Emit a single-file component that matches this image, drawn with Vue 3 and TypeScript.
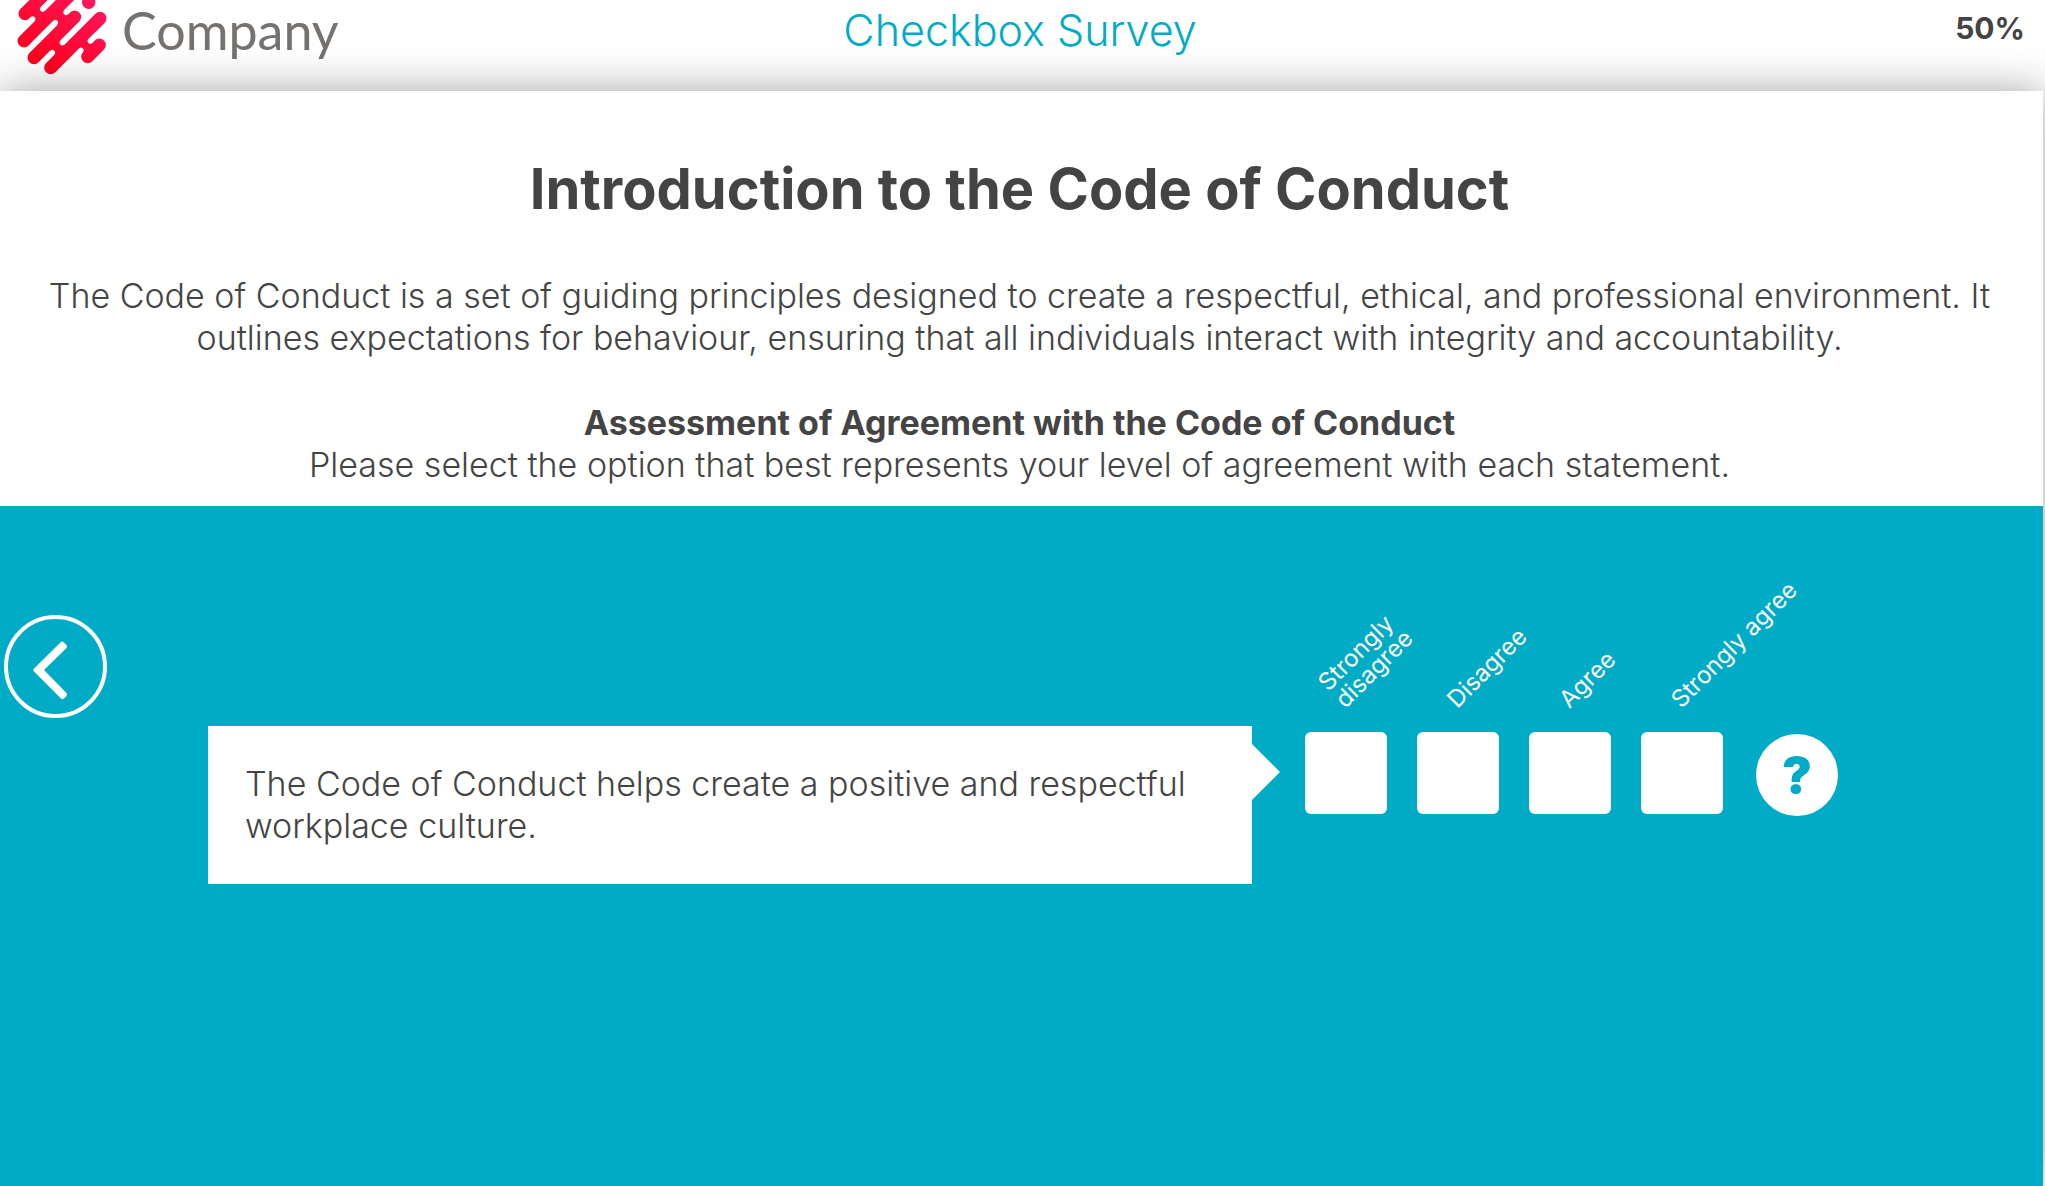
<script setup lang="ts">
import { ref } from 'vue'

interface Option {
  id: string
  lines: string[]
}

const options: Option[] = [
  { id: 'strongly-disagree', lines: ['Strongly', 'disagree'] },
  { id: 'disagree', lines: ['Disagree'] },
  { id: 'agree', lines: ['Agree'] },
  { id: 'strongly-agree', lines: ['Strongly agree'] },
]

const selected = ref<string[]>([])
</script>

<template>
  <div class="page">
    <header class="header">
      <div class="brand">
        <svg class="mark" viewBox="45 0 285 240" aria-hidden="true">
          <defs>
            <linearGradient id="mark-red" gradientUnits="userSpaceOnUse" x1="90" y1="200" x2="260" y2="-10">
              <stop offset="0" stop-color="#ff0018" />
              <stop offset="1" stop-color="#ff1559" />
            </linearGradient>
          </defs>
          <g fill="none" stroke="url(#mark-red)" stroke-width="39" stroke-linecap="round">
            <path d="M75 41L135 -19" />
            <path d="M72 123L214 -19" />
            <path d="M102 173L224 51" />
            <path d="M152 203L300 55" />
            <path d="M263 170L298 135" />
            <path d="M98 57L128 27M166 68L198 37M157 158L187 128M243 151L271 123" stroke-width="34" stroke-linecap="butt" />
          </g>
          <circle cx="266" cy="7" r="20" fill="url(#mark-red)" />
          <g fill="none" stroke="#fff" stroke-width="16" stroke-linecap="round">
            <path d="M98 57L85 70M128 27L165 -10M166 68L100 134M198 37L235 0M157 158L135 180M187 128L250 65M271 123L290 104M243 151L239 155" />
          </g>
        </svg>
        <span class="brand-name">Company</span>
      </div>
      <p class="survey-name">Checkbox Survey</p>
      <p class="progress">50%</p>
    </header>

    <main class="panel">
      <section class="intro">
        <h1>Introduction to the Code of Conduct</h1>
        <p>
          The Code of Conduct is a set of guiding principles designed to create a respectful, ethical, and professional environment. It
          outlines expectations for behaviour, ensuring that all individuals interact with integrity and accountability.
        </p>
        <h2>Assessment of Agreement with the Code of Conduct</h2>
        <p>Please select the option that best represents your level of agreement with each statement.</p>
      </section>

      <section class="survey">
        <button class="back" type="button" aria-label="Previous">
          <svg viewBox="0 0 103 103" aria-hidden="true">
            <circle cx="51.5" cy="51.5" r="49.5" fill="none" stroke="#fff" stroke-width="4" />
            <path d="M57.5 26.5Q58.500 26 60 27.500L62.500 30Q63.500 31.500 62.500 33L40 55L62.500 78Q63.500 79.500 62.500 81L60 83.500Q58.500 84.500 57 83.500L30 56.500Q28.500 55 30 53.500Z" fill="#fff" />
          </svg>
        </button>
        <div class="question">
          <p class="statement">The Code of Conduct helps create a positive and respectful workplace culture.</p>
          <svg class="pointer" viewBox="0 0 28 56" aria-hidden="true"><path d="M0 0L28 28L0 56Z" fill="#fff" /></svg>
          <div class="answers">
            <div v-for="option in options" :key="option.id" class="option">
              <label :for="option.id"><span v-for="line in option.lines" :key="line">{{ line }}</span></label>
              <input :id="option.id" v-model="selected" type="checkbox" :value="option.id" />
            </div>
          </div>
          <button class="help" type="button">?</button>
        </div>
      </section>
    </main>
  </div>
</template>

<style>
body {
  margin: 0;
  background: #fff;
}
</style>

<style scoped>
.page {
  display: flex;
  flex-direction: column;
  min-height: 100vh;
  overflow: hidden;
  color: #444;
  font-family: Inter, "Open Sans", sans-serif;
  font-size: 34px;
  line-height: 42px;
}

h1,
h2,
p {
  margin: 0;
}

.header {
  display: grid;
  grid-template-columns: 1fr auto 1fr;
  height: 91px;
  padding: 0 20px 0 15px;
}

.brand {
  display: flex;
}

.mark {
  width: 95px;
  height: 80px;
}

.brand-name {
  margin-left: 12px;
  color: #767270;
  font-family: Lato, "Open Sans", sans-serif;
  font-size: 52px;
  line-height: 60px;
}

.survey-name {
  color: #00acc5;
  font-size: 43px;
  font-weight: 300;
  line-height: 60px;
}

.progress {
  padding-top: 7px;
  font-size: 30px;
  font-weight: 700;
  text-align: right;
}

.panel {
  display: flex;
  flex: 1;
  flex-direction: column;
  margin-right: 2px;
  background: #fff;
  box-shadow: 0 0 40px rgba(0, 0, 0, 0.36);
}

.intro {
  padding: 62px 44px 20px 40px;
  font-weight: 300;
  text-align: center;
}

.intro h1 {
  margin-bottom: 50px;
  font-size: 56px;
  font-weight: 700;
  line-height: 72px;
}

.intro h2 {
  margin-top: 43px;
  font-size: 34px;
  font-weight: 700;
  line-height: 42px;
}

.survey {
  display: flex;
  flex: 1;
  align-items: flex-start;
  padding: 109px 205px 0 4px;
  background: #00acc5;
}

.back {
  flex: none;
  width: 103px;
  height: 103px;
  padding: 0;
  border: 0;
  background: none;
}

.back svg {
  display: block;
}

.question {
  display: flex;
  flex: 1;
  align-items: flex-start;
  margin: 111px 0 0 101px;
}

.statement {
  flex: 1;
  padding: 37px;
  background: #fff;
  font-weight: 300;
}

.pointer {
  width: 28px;
  height: 56px;
  margin-top: 18px;
}

.answers {
  display: flex;
  gap: 30px;
  margin: -94px 0 0 25px;
}

.option {
  display: flex;
  flex-direction: column;
  width: 82px;
}

.option label {
  display: flex;
  flex-direction: column;
  justify-content: flex-end;
  width: 0;
  height: 80px;
  margin: 0 0 20px 43px;
  font-size: 24px;
  line-height: 24px;
  color: #fff;
  white-space: nowrap;
  transform: rotate(-45deg);
  transform-origin: 0 100%;
}

.option input {
  width: 82px;
  height: 82px;
  margin: 0;
  border-radius: 6px;
  background: #fff;
  appearance: none;
}

.option input:checked {
  border: 12px solid #fff;
  background: #444;
}

.help {
  width: 82px;
  height: 82px;
  margin: 8px 0 0 33px;
  padding: 0;
  border: 0;
  border-radius: 50%;
  background: #fff;
  color: #00acc5;
  font-family: inherit;
  font-size: 50px;
  font-weight: 900;
}
</style>
